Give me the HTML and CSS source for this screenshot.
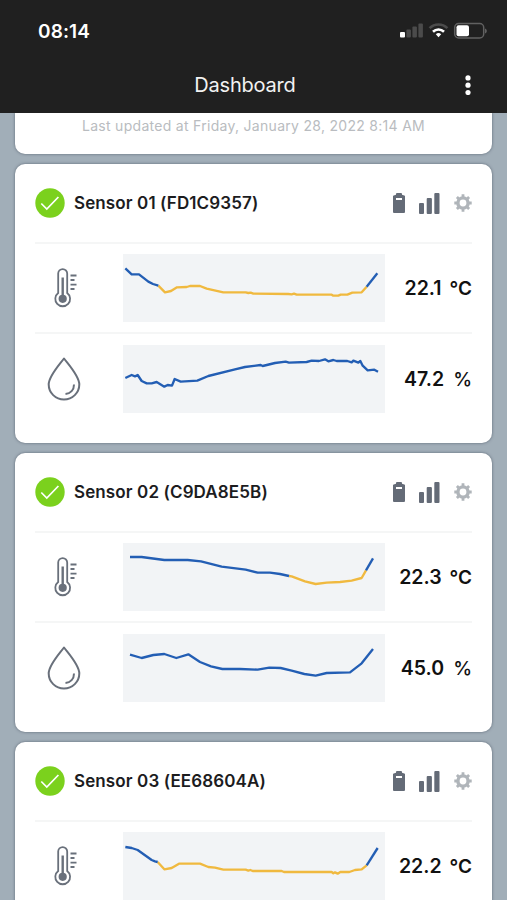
FILE: index.html
```html
<!DOCTYPE html>
<html lang="en">
<head>
    <meta charset="UTF-8">
    <meta name="viewport" content="width=device-width, initial-scale=1.0">
    <title>Dashboard</title>
    <link rel="stylesheet" href="styles.css">
</head>
<body>

<!-- Shared icons -->
<svg class="icon-defs" xmlns="http://www.w3.org/2000/svg">
    <symbol id="check" viewBox="0 0 30 30">
        <circle cx="15" cy="15" r="14.7" fill="#7bd11d"/>
        <path d="M6.3 15.5l5.5 5.6L23.4 9" fill="none" stroke="#fff" stroke-width="1.7"/>
    </symbol>
    <symbol id="battery" viewBox="0 0 12 20">
        <path d="M4 0h4a1 1 0 0 1 1 1v.7l2.300.8a1 1 0 0 1 .7 1V19a1 1 0 0 1-1 1H1a1 1 0 0 1-1-1V3.500a1 1 0 0 1 .7-1L3 1.700V1a1 1 0 0 1 1-1z" fill="#646b77"/>
        <rect x="3" y="5" width="6" height="2" fill="#fff"/>
    </symbol>
    <symbol id="signal" viewBox="0 0 21 21">
        <g fill="#646b77">
            <rect x="0" y="10" width="5" height="11" rx="1"/>
            <rect x="7.7" y="5" width="5.2" height="16" rx="1"/>
            <rect x="15.3" y="0" width="5.2" height="21" rx="1"/>
        </g>
    </symbol>
    <symbol id="gear" viewBox="0 0 18 18">
        <g fill="none" stroke="#b0b5ba">
            <circle cx="9" cy="9" r="5.1" stroke-width="3.4"/>
            <path d="M9 .3v3M9 14.700v3M.3 9h3M14.700 9h3M2.900 2.900l2 2M13.100 13.100l2 2M15.100 2.900l-2 2M4.900 13.100l-2 2" stroke-width="2.8"/>
        </g>
    </symbol>
    <symbol id="thermometer" viewBox="0 0 24 40">
        <g fill="none" stroke="#69707b" stroke-width="1.8">
            <path d="M4.2 25V5.6a4.5 4.5 0 0 1 9 0V25a7.4 7.4 0 1 1-9 0z"/>
            <path d="M8.7 9.5V29" stroke-width="2.4"/>
            <path d="M16.5 7.5h6M16.5 12h4M16.5 16.6h6M16.5 21h4"/>
        </g>
        <circle cx="8.7" cy="30.8" r="4.1" fill="#69707b"/>
    </symbol>
    <symbol id="drop" viewBox="0 0 34 44">
        <g fill="none" stroke="#69707b" stroke-width="2">
            <path d="M17 1.5C13 7 1.7 19 1.7 27.5a15.3 15 0 0 0 30.6 0C32.3 19 21 7 17 1.5z" stroke-linejoin="round"/>
            <path d="M27 27.5c0 5.5-3.5 9-8.5 9.5"/>
        </g>
    </symbol>
</svg>

<header class="topbar">
    <div class="statusbar">
        <span class="time">08:14</span>
        <svg class="status-icons" viewBox="0 0 88 18">
            <g fill="#4b4b4b">
                <rect x="0" y="10" width="5" height="5.5" rx="1" fill="#fff"/>
                <rect x="6.4" y="7.5" width="4.5" height="8" rx="1"/>
                <rect x="12.4" y="4.5" width="4.5" height="11" rx="1"/>
                <rect x="18.4" y="1.5" width="4.5" height="14" rx="1"/>
            </g>
            <g fill="none" stroke-width="2.6">
                <path d="M29.6 6.2a12.5 12.5 0 0 1 17.8 0" stroke="#4b4b4b"/>
                <path d="M33 9.7a8 8 0 0 1 11 0" stroke="#fff"/>
            </g>
            <path d="M38.5 15.2l-2.7-3a4 4 0 0 1 5.4 0z" fill="#fff"/>
            <rect x="54.7" y="1.5" width="29" height="14.5" rx="4" fill="none" stroke="#616161" stroke-width="1.5"/>
            <rect x="56.5" y="3.3" width="12.5" height="11" rx="2" fill="#fff"/>
            <path d="M85 6.5c2.4.7 2.4 4.3 0 5z" fill="#616161"/>
        </svg>
    </div>
    <div class="titlebar">
        <h1>Dashboard</h1>
        <svg class="menu" viewBox="0 0 6 20" fill="#fff">
            <circle cx="3" cy="2.9" r="2.6"/>
            <circle cx="3" cy="10.2" r="2.6"/>
            <circle cx="3" cy="17.5" r="2.6"/>
        </svg>
    </div>
</header>

<main>
    <div class="card updated">Last updated at Friday, January 28, 2022 8:14 AM</div>

    <div class="card">
        <div class="card-head">
            <svg class="check"><use href="#check"/></svg>
            <h2>Sensor 01 (FD1C9357)</h2>
            <svg class="battery"><use href="#battery"/></svg>
            <svg class="signal"><use href="#signal"/></svg>
            <svg class="gear"><use href="#gear"/></svg>
        </div>
        <div class="row temperature">
            <div class="type"><svg class="thermometer"><use href="#thermometer"/></svg></div>
            <svg class="chart" viewBox="0 0 786 204">
                <polyline points="106,95 126,115 144,111 162,100 191,99 201,96 231,96 251,104 301,115 368,115 376,117 383,116 391,119 496,120 506,121 513,119 521,122 626,122 631,125 646,125 653,122 673,122 688,116 716,115 731,98" class="low"/>
                <polyline points="7,43 26,61 48,61 76,83 90,90 106,95"/>
                <polyline points="731,98 763,58"/>
            </svg>
            <div class="value">22.1<span class="unit">°C</span></div>
        </div>
        <div class="row">
            <div class="type"><svg class="drop"><use href="#drop"/></svg></div>
            <svg class="chart" viewBox="0 0 786 204">
                <polyline points="7,99 26,90 36,94 44,90 56,108 71,115 86,115 101,111 124,125 134,120 147,122 155,102 173,110 223,107 256,93 336,73 366,66 413,60 419,63 456,54 488,50 498,53 551,51 566,47 588,48 606,43 616,49 631,45 641,48 673,48 686,52 691,47 706,53 712,48 719,62 734,76 754,74 765,80"/>
            </svg>
            <div class="value">47.2<span class="unit percent">%</span></div>
        </div>
    </div>

    <div class="card">
        <div class="card-head">
            <svg class="check"><use href="#check"/></svg>
            <h2>Sensor 02 (C9DA8E5B)</h2>
            <svg class="battery"><use href="#battery"/></svg>
            <svg class="signal"><use href="#signal"/></svg>
            <svg class="gear"><use href="#gear"/></svg>
        </div>
        <div class="row temperature">
            <div class="type"><svg class="thermometer"><use href="#thermometer"/></svg></div>
            <svg class="chart" viewBox="0 0 786 204">
                <polyline points="498,99 506,100 546,115 578,123 611,119 651,117 686,113 716,105 729,82" class="low"/>
                <polyline points="21,42 56,42 124,51 194,51 234,55 296,71 368,80 404,89 441,89 471,93 498,99"/>
                <polyline points="729,82 750,46"/>
            </svg>
            <div class="value">22.3<span class="unit">°C</span></div>
        </div>
        <div class="row">
            <div class="type"><svg class="drop"><use href="#drop"/></svg></div>
            <svg class="chart" viewBox="0 0 786 204">
                <polyline points="21,62 56,72 91,63 124,60 160,72 196,61 231,84 264,97 298,105 351,105 404,107 439,101 473,102 506,110 544,120 578,125 611,117 681,115 716,88 750,45"/>
            </svg>
            <div class="value">45.0<span class="unit percent">%</span></div>
        </div>
    </div>

    <div class="card">
        <div class="card-head">
            <svg class="check"><use href="#check"/></svg>
            <h2>Sensor 03 (EE68604A)</h2>
            <svg class="battery"><use href="#battery"/></svg>
            <svg class="signal"><use href="#signal"/></svg>
            <svg class="gear"><use href="#gear"/></svg>
        </div>
        <div class="row temperature">
            <div class="type"><svg class="thermometer"><use href="#thermometer"/></svg></div>
            <svg class="chart" viewBox="0 0 786 204">
                <polyline points="104,90 124,112 146,108 168,95 231,95 256,105 276,107 301,113 368,113 376,116 382,114 389,117 476,117 483,120 626,120 631,124 636,121 644,125 652,120 679,120 696,114 716,112 731,100" class="low"/>
                <polyline points="7,45 26,48 44,54 86,84 96,88 104,90"/>
                <polyline points="731,100 764,48"/>
            </svg>
            <div class="value">22.2<span class="unit">°C</span></div>
        </div>
    </div>
</main>

</body>
</html>
```
FILE: styles.css
```css
body {
    font-family: Inter, "Liberation Sans", sans-serif;
    background-color: #a1aeb8;
    margin: 0;
}
svg {
    display: block;
    flex: none;
}
.icon-defs {
    display: none;
}
/* Top bar */
.topbar {
    background-color: #202020;
    color: #fff;
    height: 113px;
}
.statusbar {
    display: flex;
    justify-content: space-between;
    align-items: center;
    height: 62px;
    padding: 0 19px 0 38px;
}
.time {
    font-size: 19px;
    font-weight: 600;
    letter-spacing: 0.1px;
}
.status-icons {
    width: 88px;
    height: 18px;
}
.titlebar {
    display: flex;
    align-items: center;
    height: 46px;
    padding: 0 36px 0 25px;
}
.titlebar h1 {
    flex: 1;
    margin: 0;
    font-size: 20px;
    font-weight: 400;
    letter-spacing: -0.2px;
    text-align: center;
    color: #f2f2f2;
}
.menu {
    width: 6px;
    height: 20px;
}
/* Cards */
main {
    height: 787px;
    padding: 0 15px;
    overflow: hidden;
    box-sizing: border-box;
}
.card {
    background-color: #fff;
    border-radius: 10px;
    box-shadow: 0 0 3px rgba(60, 70, 85, 0.7);
    box-sizing: border-box;
    height: 279px;
    padding: 0 20px;
    margin-bottom: 10px;
}
.updated {
    height: 41px;
    padding: 3px 0 0;
    border-radius: 0 0 10px 10px;
    font-size: 14px;
    line-height: 19px;
    letter-spacing: 0.29px;
    text-align: center;
    color: #b9bcc0;
}
.card-head {
    display: flex;
    align-items: center;
    height: 78px;
}
.card-head h2 {
    flex: 1;
    margin: 0 0 0 9px;
    font-size: 17px;
    font-weight: 600;
    letter-spacing: 0.12px;
    color: #1c1c1e;
    white-space: nowrap;
}
.check {
    width: 30px;
    height: 30px;
}
.battery {
    width: 12px;
    height: 20px;
}
.signal {
    width: 21px;
    height: 21px;
    margin: 0 14px;
}
.gear {
    width: 18px;
    height: 18px;
}
.row {
    display: flex;
    align-items: center;
    height: 89px;
    border-top: 2px solid #f5f6f6;
}
.temperature {
    height: 88px;
}
.type {
    width: 88px;
}
.thermometer {
    width: 24px;
    height: 40px;
    margin-left: 19px;
}
.drop {
    width: 34px;
    height: 44px;
    margin-left: 12px;
}
.chart {
    width: 262px;
    height: 68px;
    background-color: #f2f4f6;
}
.chart polyline {
    fill: none;
    stroke: #235eb4;
    stroke-width: 7;
    stroke-linejoin: round;
}
.chart .low {
    stroke: #f0b93f;
}
.value {
    flex: 1;
    font-size: 19.5px;
    font-weight: 600;
    text-align: right;
    white-space: nowrap;
    color: #111;
}
.unit {
    margin-left: 8px;
    font-size: 19px;
}
.percent {
    margin-left: 9px;
    font-weight: 500;
}
```
